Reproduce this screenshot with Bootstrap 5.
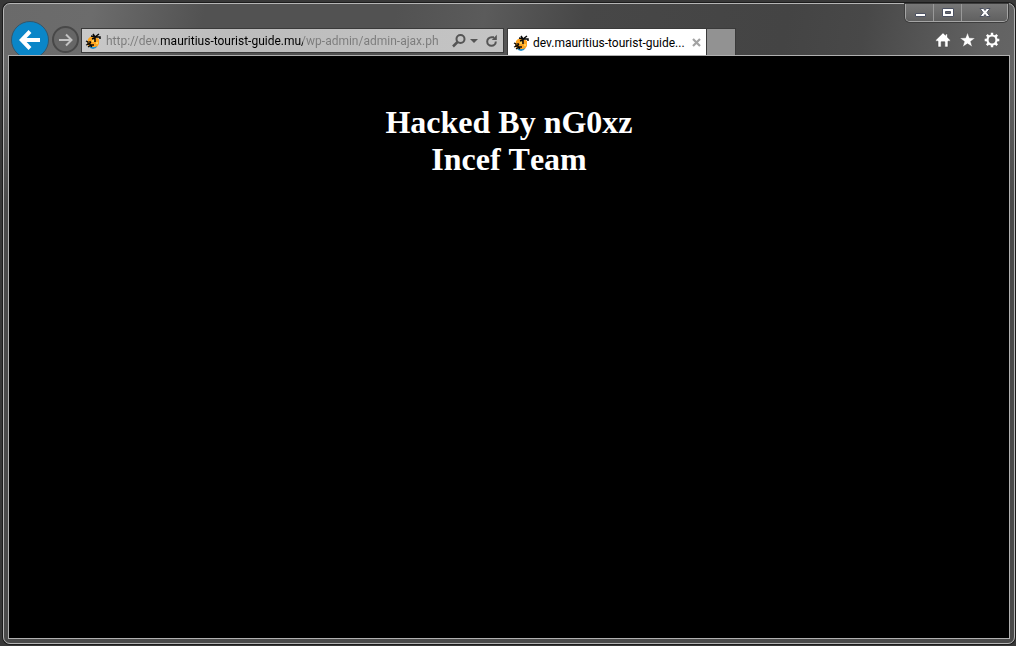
<!DOCTYPE html>
<html lang="en">
<head>
<meta charset="utf-8">
<meta name="viewport" content="width=device-width, initial-scale=1">
<title>dev.mauritius-tourist-guide.mu</title>
<link href="https://cdn.jsdelivr.net/npm/bootstrap@5.3.0/dist/css/bootstrap.min.css" rel="stylesheet">
<style>
  body { background: #383838; font-family: Roboto, "Open Sans", sans-serif; font-size: 12px; line-height: 16px; padding: 3px 1px 2px 3px; }
  button, input { font: inherit; }
  .frame {
    border: 1px solid #b5b5b5; border-radius: 7px; padding: 0 4px 4px; box-shadow: 0 0 0 1px #1c1c1c;
    background:
      linear-gradient(#0000 0 60px, #4a4a4a 200px),
      linear-gradient(100deg, #6a6a6a 0, #6c6c6c 8%, #525252 18%, #525252 35%, #5b5b5b 43%, #474747 52%, #444 70%, #484848 77%, #626262 88%, #6c6c6c 100%);
  }
  .caption-row { height: 18px; padding-right: 2px; }
  .caption-group { height: 18px; border: 1px solid #a5a5a5; border-top: 0; border-radius: 0 0 5px 5px; overflow: hidden; box-shadow: 0 0 0 1px #3d3d3d; }
  .caption-group button { width: 28px; height: 17px; border: 0; border-right: 1px solid #999; background: linear-gradient(#777, #606060); }
  .caption-group button:last-child { width: 45px; border-right: 0; }
  .nav-row { height: 33px; padding-left: 3px; padding-right: 10px; }
  .nav-row svg, .caption-group svg { display: block; flex: none; }
  .round-btn { border: 1px solid #444; border-radius: 50%; flex: none; }
  .back { width: 38px; height: 38px; background: #0a86c8; border-color: #35566a; margin-top: -1px; }
  .forward { width: 27px; height: 27px; background: #666; margin: 4px 2px 0 3px; border: 2px solid #484848; }
  .address { width: 423px; height: 25px; margin-top: 6px; background: linear-gradient(90deg, #c9c9c9, #bcbcbc 35%, #c4c4c4); border: 1px solid #3a3a3a; padding: 0 5px 0 3px; }
  .address input {
    min-width: 0; width: 344px; border: 0; outline: 0; padding: 0; height: 20px; margin-left: 5px;
    background: linear-gradient(90deg, #7b7b7b 0 55px, #000 55px 197px, #7b7b7b 197px);
    -webkit-background-clip: text; background-clip: text; color: transparent;
  }
  .tool { border: 0; background: none; padding: 0; }
  .page-tab { width: 200px; height: 28px; background: #fff; border: 1px solid #3a3a3a; border-bottom: 0; margin: 6px 0 0 3px; padding: 0 5px; }
  .page-tab a { color: #000; margin-left: 4px; }
  .new-tab { width: 29px; height: 28px; background: #929292; border: 1px solid #3a3a3a; border-width: 1px 1px 0 0; margin-top: 6px; }
  .tools { margin-top: 10px; }
  .view { background: #000; border: 1px solid #b0b0b0; z-index: 1; padding-top: 48px; }
  .view h1 { font: bold 32px/37px "Liberation Serif", serif; font-kerning: none; color: #fff; }
</style>
</head>
<body class="vh-100 d-flex flex-column overflow-hidden">
<svg width="0" height="0" class="position-absolute" aria-hidden="true">
  <symbol id="palm" viewBox="0 0 16 16">
    <path fill="#ffa51f" d="M5 4h6l3 2v5l-2 3-4 1-4-1-2-3 1-5z"/>
    <path fill="#2090d0" d="M4 13l3 1h3l2-1-1 2-3 1-3-1z"/>
    <path fill="#ffd052" d="M7 6h2v3H7zM11 9h2v2h-2z"/>
    <path fill="none" stroke="#080808" stroke-width="1.500" d="M10 9V4L8 1M10 4L6 3M10 4l4-3M10 4h5v2M10 5L7 6"/>
    <path fill="none" stroke="#080808" stroke-width="1.300" d="M1 8l2 1v3M5 8v4l2 2M1 12l3-1 2-2M3 14l3-2h3"/>
  </symbol>
</svg>
<div class="frame flex-grow-1 d-flex flex-column">
  <header>
    <div class="caption-row d-flex justify-content-end">
      <div class="caption-group d-flex">
        <button class="d-flex align-items-center justify-content-center p-0" aria-label="Minimize"><svg width="14" height="12" viewBox="0 0 14 12"><path d="M2.500 6.500h10v3h-10z" fill="#fff" stroke="#4d5262"/></svg></button>
        <button class="d-flex align-items-center justify-content-center p-0" aria-label="Maximize"><svg width="12" height="12" viewBox="0 0 12 12"><path d="M.5 1.500h11v8H.5zM3.500 4.500h5v2h-5z" fill="#fff" fill-rule="evenodd" stroke="#4d5262"/></svg></button>
        <button class="d-flex align-items-center justify-content-center p-0" aria-label="Close window"><svg width="12" height="12" viewBox="0 0 12 12"><path d="M1 1.500h3.500L6 3.500l1.500-2H11L8 5.500l3 4H7.500L6 7.500l-1.500 2H1l3-4z" fill="#fff" stroke="#4d5262"/></svg></button>
      </div>
    </div>
    <div class="nav-row d-flex align-items-start">
      <button class="round-btn back p-0 d-flex align-items-center justify-content-center" aria-label="Back"><svg width="22" height="20" viewBox="0 0 22 20"><path d="M11 1.500L2.800 10l8.200 8.500M3 10h18" fill="none" stroke="#fff" stroke-width="4"/></svg></button>
      <button class="round-btn forward p-0 d-flex align-items-center justify-content-center" aria-label="Forward"><svg width="14" height="14" viewBox="0 0 14 14"><path d="M7 1.500L12.500 7 7 12.500M0 7h12" fill="none" stroke="#c2c2c2" stroke-width="2"/></svg></button>
      <div class="address d-flex align-items-center">
        <svg width="16" height="16" aria-hidden="true"><use href="#palm"/></svg>
        <input type="text" aria-label="Address" value="http://dev.mauritius-tourist-guide.mu/wp-admin/admin-ajax.ph">
        <button class="tool ms-auto" aria-label="Search"><svg width="14" height="14" viewBox="0 0 14 14"><circle cx="8.500" cy="5" r="4" fill="none" stroke="#555" stroke-width="2"/><path d="M5.500 8L1 12.500" stroke="#555" stroke-width="2.500"/></svg></button>
        <button class="tool ms-1" aria-label="Address history"><svg width="8" height="4" viewBox="0 0 8 4"><path d="M0 0h8L4 4z" fill="#555"/></svg></button>
        <button class="tool ms-2" aria-label="Refresh"><svg width="12" height="14" viewBox="0 0 12 14"><path d="M8 3.200H5.500A4.300 4.300 0 1 0 9.800 7.500" fill="none" stroke="#555" stroke-width="2"/><path d="M10.800.8v5.200H5.800z" fill="#555"/></svg></button>
      </div>
      <div class="page-tab d-flex align-items-center">
        <svg width="16" height="16" aria-hidden="true"><use href="#palm"/></svg>
        <a href="#" class="text-decoration-none text-nowrap">dev.mauritius-tourist-guide...</a>
        <button class="tool ms-auto" aria-label="Close tab"><svg width="9" height="9" viewBox="0 0 9 9"><path d="M1 1l7 7M8 1L1 8" stroke="#a3a3a3" stroke-width="2.200"/></svg></button>
      </div>
      <button class="new-tab p-0" aria-label="New tab"></button>
      <div class="tools ms-auto d-flex gap-2">
        <button class="tool" aria-label="Home"><svg width="16" height="16" viewBox="0 0 16 16"><path d="M8 .8l2.500 2.500V2h2v3.300L15.300 8v1.200H13V15H9.800V9.800H6.200V15H3V9.200H.7V8z" fill="#fff" stroke="#484848" stroke-width=".6"/></svg></button>
        <button class="tool" aria-label="Favorites"><svg width="17" height="16" viewBox="0 0 17 16"><path d="M8.500.5l2 5.300 5.800.2-4.600 3.500 1.700 5.500-4.900-3.200L3.600 15l1.700-5.500L.7 6l5.800-.2z" fill="#fff" stroke="#484848" stroke-width=".5"/></svg></button>
        <button class="tool" aria-label="Tools"><svg width="16" height="16" viewBox="0 0 16 16"><circle cx="8" cy="8" r="4.500" fill="none" stroke="#fff" stroke-width="2.200"/><path d="M8 .7v2.500M8 12.800v2.500M.7 8h2.500M12.800 8h2.500M2.800 2.800l1.800 1.800M11.400 11.400l1.800 1.800M2.800 13.200l1.800-1.800M11.400 4.600l1.800-1.800" stroke="#fff" stroke-width="2.400"/></svg></button>
      </div>
    </div>
  </header>
  <main class="view flex-grow-1 position-relative text-center">
    <h1 class="m-0">Hacked By nG0xz<br>Incef Team</h1>
  </main>
</div>
<script src="https://cdn.jsdelivr.net/npm/bootstrap@5.3.0/dist/js/bootstrap.bundle.min.js"></script>
</body>
</html>
